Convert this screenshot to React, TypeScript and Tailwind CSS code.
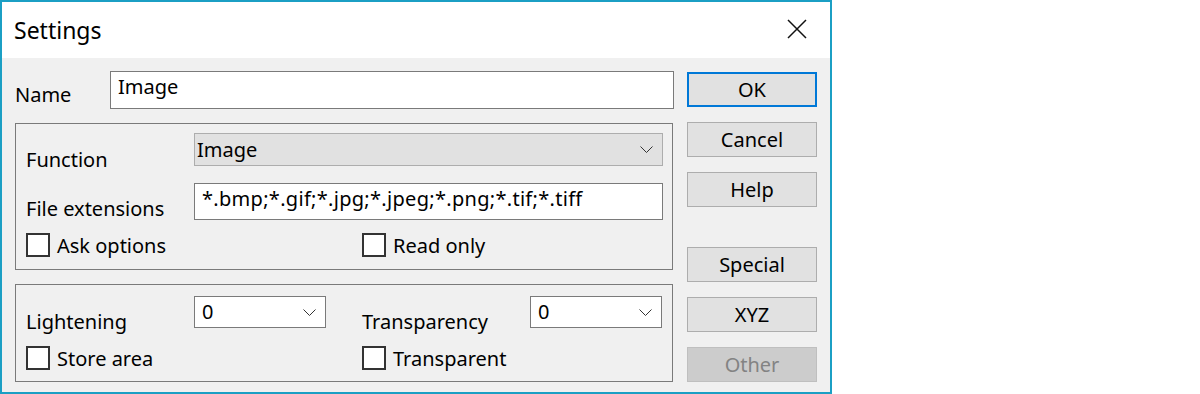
import React from "react";

function Chevron() {
  return (
    <svg width="13" height="7" viewBox="0 0 13 7" className="shrink-0">
      <path d="M0.5 0.5 L6.5 6.5 L12.5 0.5" stroke="#333" strokeWidth="1" fill="none" />
    </svg>
  );
}

function CheckBox({ label }: { label: string }) {
  return (
    <div className="flex items-center gap-[7px]">
      <div className="w-[24px] h-[24px] border-2 border-[#333333] bg-white" />
      <span className="leading-[20px] pt-[2px]">{label}</span>
    </div>
  );
}

function Btn({ label, primary, disabled }: { label: string; primary?: boolean; disabled?: boolean }) {
  const cls = primary
    ? "border-2 border-[#0078d7] bg-[#e1e1e1] text-black"
    : disabled
    ? "border border-[#bfbfbf] bg-[#cccccc] text-[#838383]"
    : "border border-[#adadad] bg-[#e1e1e1] text-black";
  return (
    <div className={`h-[35px] w-[130px] flex items-center justify-center leading-[20px] ${cls}`}>
      {label}
    </div>
  );
}

export default function App() {
  return (
    <div className="w-[1200px] h-[394px] bg-white font-['Noto_Sans',sans-serif] text-[20px] text-black">
      <div className="w-[832px] h-[394px] border-2 border-[#1b9fc4] flex flex-col">
        {/* Title bar */}
        <div className="h-[56px] bg-white flex items-center justify-between pl-[12px] pr-[23px]">
          <span className="text-[23px] leading-[24px]">Settings</span>
          <svg width="20" height="20" viewBox="0 0 20 20" className="mb-[2px]">
            <path d="M1 1 L19 19 M19 1 L1 19" stroke="#111" strokeWidth="1.5" fill="none" />
          </svg>
        </div>
        {/* Body */}
        <div className="flex-1 bg-[#f0f0f0] flex justify-between pl-[13px] pr-[13px]">
          {/* Left column */}
          <div className="w-[659px] pt-[13px] flex flex-col">
            <div className="flex h-[38px]">
              <div className="w-[95px] h-[38px] pt-[14px] leading-[20px]">Name</div>
              <div className="flex-1 border border-[#7a7a7a] bg-white pt-[5px] pl-[7px] leading-[20px]">Image</div>
            </div>

            <div className="mt-[14px] w-[658px] h-[147px] border border-[#7a7a7a] pt-[9px] pl-[10px] pr-[9px] flex flex-col">
              <div className="flex h-[33px]">
                <div className="w-[168px] h-[33px] pt-[17px] leading-[20px]">Function</div>
                <div className="flex-1 border border-[#adadad] bg-[#e1e1e1] flex items-center justify-between pl-[2px] pr-[9px]">
                  <span className="leading-[20px]">Image</span>
                  <Chevron />
                </div>
              </div>
              <div className="mt-[17px] flex h-[37px]">
                <div className="w-[168px] h-[37px] pt-[16px] leading-[20px]">File extensions</div>
                <div className="flex-1 border border-[#7a7a7a] bg-white pt-[5px] pl-[7px] leading-[20px] tracking-[0.3px]">
                  *.bmp;*.gif;*.jpg;*.jpeg;*.png;*.tif;*.tiff
                </div>
              </div>
              <div className="mt-[13px] flex h-[24px]">
                <div className="w-[336px]">
                  <CheckBox label="Ask options" />
                </div>
                <CheckBox label="Read only" />
              </div>
            </div>

            <div className="mt-[14px] w-[658px] h-[98px] border border-[#7a7a7a] pt-[11px] pl-[10px] pr-[9px] flex flex-col">
              <div className="flex h-[32px]">
                <div className="w-[168px] h-[32px] pt-[16px] leading-[20px]">Lightening</div>
                <div className="w-[132px] border border-[#7a7a7a] bg-white flex items-center justify-between pl-[7px] pr-[9px]">
                  <span className="leading-[20px]">0</span>
                  <Chevron />
                </div>
                <div className="w-[204px] h-[32px] pt-[16px] pl-[36px] leading-[20px]">Transparency</div>
                <div className="w-[132px] border border-[#7a7a7a] bg-white flex items-center justify-between pl-[7px] pr-[9px]">
                  <span className="leading-[20px]">0</span>
                  <Chevron />
                </div>
              </div>
              <div className="mt-[18px] flex h-[24px]">
                <div className="w-[336px]">
                  <CheckBox label="Store area" />
                </div>
                <CheckBox label="Transparent" />
              </div>
            </div>
          </div>

          {/* Right column */}
          <div className="w-[130px] pt-[14px] flex flex-col">
            <Btn label="OK" primary />
            <div className="mt-[15px]"><Btn label="Cancel" /></div>
            <div className="mt-[15px]"><Btn label="Help" /></div>
            <div className="mt-[40px]"><Btn label="Special" /></div>
            <div className="mt-[15px]"><Btn label="XYZ" /></div>
            <div className="mt-[15px]"><Btn label="Other" disabled /></div>
          </div>
        </div>
      </div>
    </div>
  );
}
